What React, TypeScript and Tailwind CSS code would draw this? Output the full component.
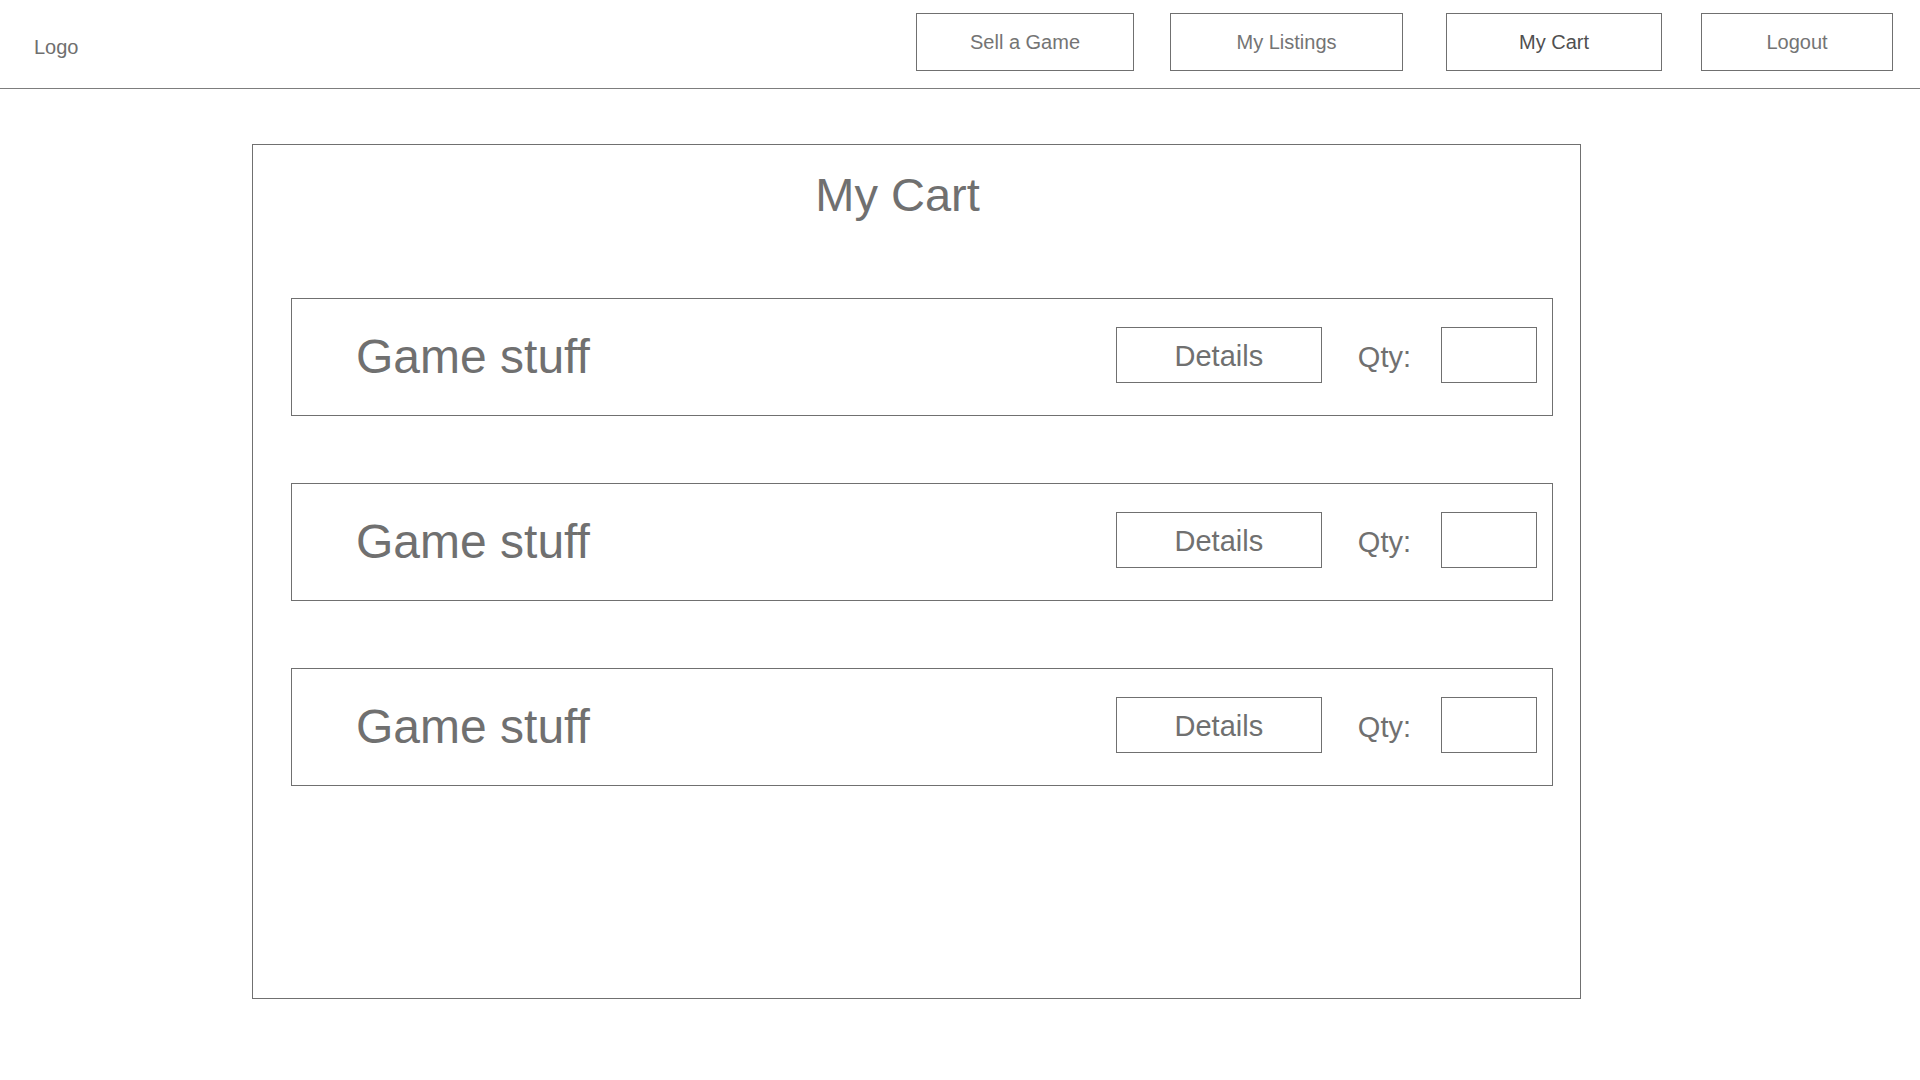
import React from 'react';

const navItems = [
  { label: 'Sell a Game', width: 'w-[218px]', gap: '' },
  { label: 'My Listings', width: 'w-[233px]', gap: 'ml-[36px]' },
  { label: 'My Cart', width: 'w-[216px]', gap: 'ml-[43px]', active: true },
  { label: 'Logout', width: 'w-[192px]', gap: 'ml-[39px]' },
];

const cartItems = ['Game stuff', 'Game stuff', 'Game stuff'];

const CartRow: React.FC<{ name: string }> = ({ name }) => (
  <div className="h-[118px] border border-[#707070] flex items-center pl-[64px] pr-[15px]">
    <div className="text-[48px] leading-none text-[#707070]">{name}</div>
    <div className="flex-1" />
    <button className="mb-[5px] pt-[4px] w-[206px] h-[56px] border border-[#707070] text-[29px] leading-none text-[#707070] bg-white">
      Details
    </button>
    <span className="ml-[36px] text-[29px] leading-none text-[#707070]">Qty:</span>
    <div className="mb-[5px] ml-[30px] w-[96px] h-[56px] border border-[#707070]" />
  </div>
);

export default function App() {
  return (
    <div
      className="w-[1920px] h-[1080px] bg-white overflow-hidden"
      style={{ fontFamily: '"Liberation Sans", Arial, Helvetica, sans-serif' }}
    >
      <header className="h-[89px] border-b border-[#7d7d7d] flex items-start">
        <div className="pl-[34px] pt-[37px] text-[20px] leading-none text-[#6f6f6f]">Logo</div>
        <nav className="ml-auto mr-[27px] mt-[13px] flex">
          {navItems.map((item) => (
            <button
              key={item.label}
              className={`${item.width} ${item.gap} h-[58px] border border-[#707070] bg-white text-[20px] leading-none ${
                item.active ? 'text-[#505050]' : 'text-[#747474]'
              }`}
            >
              {item.label}
            </button>
          ))}
        </nav>
      </header>

      <main className="mt-[55px] ml-[252px] w-[1329px] h-[855px] border border-[#707070]">
        <h1 className="pt-[26px] pr-[38px] text-center text-[47px] leading-none text-[#707070]">My Cart</h1>
        <div className="mt-[80px] pl-[38px] pr-[27px] flex flex-col gap-[67px]">
          {cartItems.map((name, i) => (
            <CartRow key={i} name={name} />
          ))}
        </div>
      </main>
    </div>
  );
}
